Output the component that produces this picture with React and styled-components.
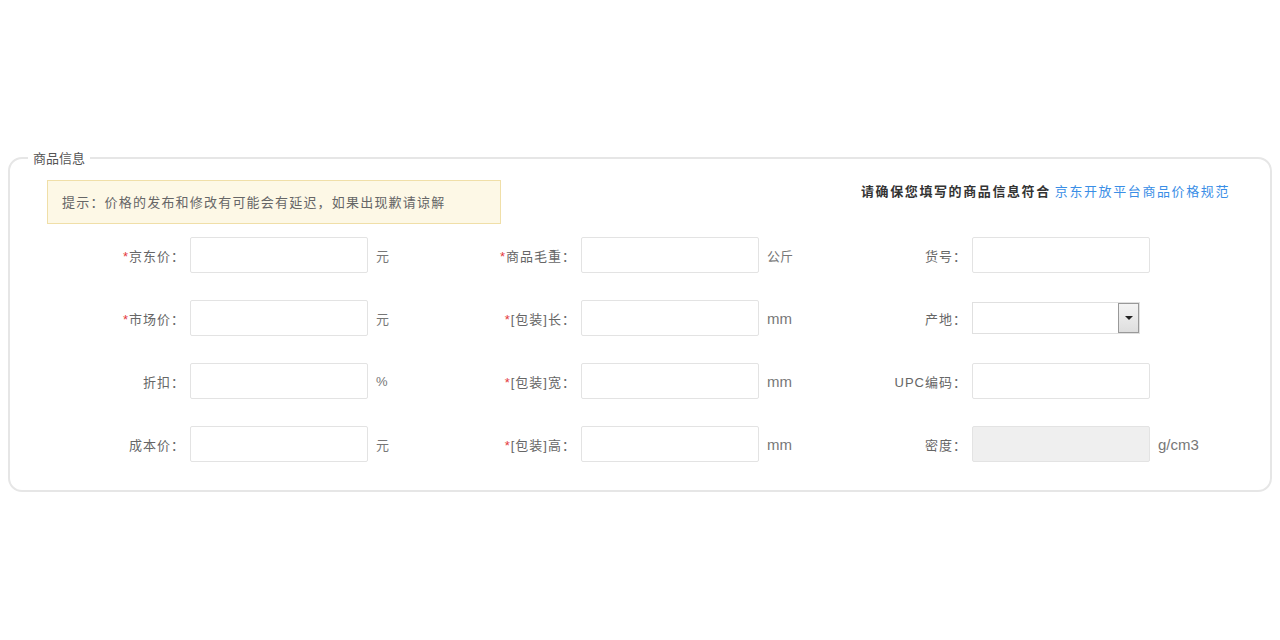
import React from "react";
import styled, { createGlobalStyle } from "styled-components";

const G = createGlobalStyle`
  body{margin:0;background:#fff;font-family:"Liberation Sans","Noto Sans CJK SC",sans-serif;}
`;
const Page = styled.div`padding:148px 8px 0 8px;`;
const Fieldset = styled.fieldset`
  margin:0;border:2px solid #e6e6e6;border-radius:14px;padding:13px 0 0 0;height:344px;box-sizing:border-box;
`;
const Legend = styled.legend`font-size:13px;color:#555;padding:0 5px;margin-left:18px;`;
const Top = styled.div`display:flex;justify-content:space-between;align-items:flex-start;padding:0 40px 0 37px;`;
const Notice = styled.div`
  background:#fdf8e6;border:1px solid #f0dfa8;padding:0 14px;height:44px;line-height:44px;
  font-size:13px;letter-spacing:1.2px;color:#666;width:454px;box-sizing:border-box;white-space:nowrap;
`;
const Rule = styled.div`font-size:13px;letter-spacing:1.6px;color:#333;font-weight:bold;margin-top:1px;
  a{color:#3a8ee6;font-weight:normal;text-decoration:none;margin-left:4px;}`;
const Rows = styled.div`display:flex;flex-direction:column;gap:27px;padding:13px 0 0 75px;`;
const Row = styled.div`display:flex;height:36px;`;
const Field = styled.div`display:flex;align-items:center;width:391px;`;
const Label = styled.div`width:100px;text-align:right;font-size:13px;letter-spacing:1px;color:#666;white-space:nowrap;
  span{color:#e4393c;}`;
const Input = styled.div`
  margin-left:5px;width:178px;height:36px;box-sizing:border-box;border:1px solid #e3e3e3;border-radius:2px;
  background:${p=>p.$disabled?"#efefef":"#fff"};
`;
const Select = styled.div`
  margin-left:5px;width:168px;height:32px;box-sizing:border-box;border:1px solid #e0e0e0;display:flex;justify-content:flex-end;
`;
const Arrow = styled.div`width:21px;height:30px;background:linear-gradient(#f4f4f4,#dedede);border:1px solid #999;box-sizing:border-box;display:flex;align-items:center;justify-content:center;
  &:after{content:"";border:4px solid transparent;border-top:4px solid #222;margin-top:4px;}`;
const Unit = styled.div`margin-left:8px;font-size:${p=>p.$big?"15px":"13px"};color:#777;`;

const F = ({ req, label, unit, big, select, disabled }) => (
  <Field>
    <Label>{req && <span>*</span>}{label}：</Label>
    {select ? <Select><Arrow /></Select> : <Input $disabled={disabled} />}
    {unit && <Unit $big={big}>{unit}</Unit>}
  </Field>
);

export default function App() {
  return (
    <Page>
      <G />
      <Fieldset>
        <Legend>商品信息</Legend>
        <Top>
          <Notice>提示：价格的发布和修改有可能会有延迟，如果出现歉请谅解</Notice>
          <Rule>请确保您填写的商品信息符合<a>京东开放平台商品价格规范</a></Rule>
        </Top>
        <Rows>
          <Row><F req label="京东价" unit="元" /><F req label="商品毛重" unit="公斤" /><F label="货号" /></Row>
          <Row><F req label="市场价" unit="元" /><F req label="[包装]长" unit="mm" big /><F label="产地" select /></Row>
          <Row><F label="折扣" unit="%" /><F req label="[包装]宽" unit="mm" big /><F label="UPC编码" /></Row>
          <Row><F label="成本价" unit="元" /><F req label="[包装]高" unit="mm" big /><F label="密度" unit="g/cm3" big disabled /></Row>
        </Rows>
      </Fieldset>
    </Page>
  );
}
